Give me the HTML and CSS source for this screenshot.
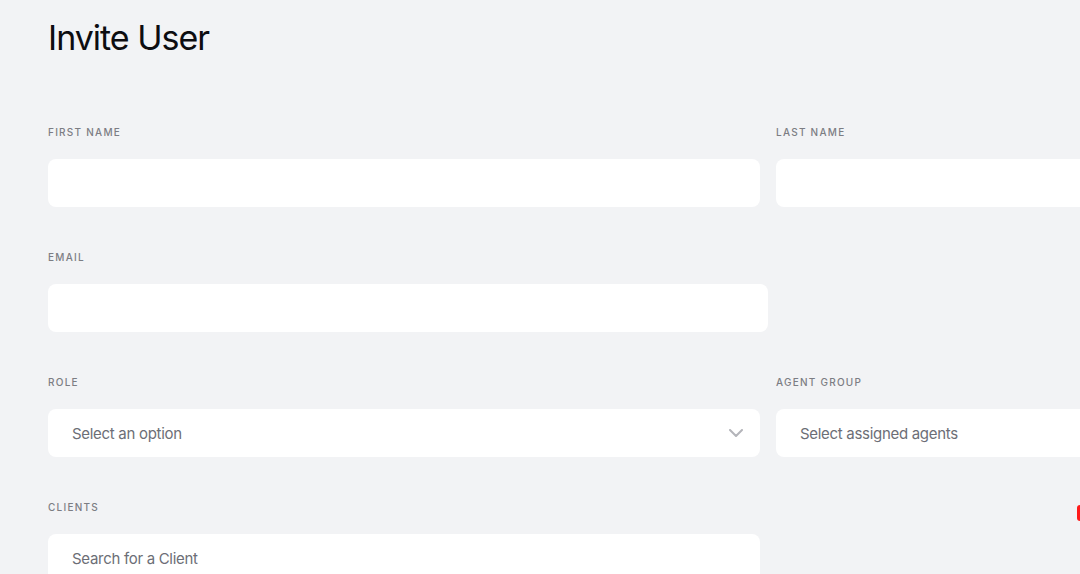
FILE: index.html
```html
<!DOCTYPE html>
<html lang="en">
<head>
<meta charset="utf-8">
<title>Invite User</title>
<link rel="stylesheet" href="styles.css">
</head>
<body>
<main class="page">
  <h1 class="title">Invite User</h1>
  <form class="form">
    <div class="row two">
      <div class="field">
        <label class="label">First Name</label>
        <div class="input"></div>
      </div>
      <div class="field">
        <label class="label">Last Name</label>
        <div class="input"></div>
      </div>
    </div>
    <div class="row">
      <div class="field email">
        <label class="label">Email</label>
        <div class="input"></div>
      </div>
    </div>
    <div class="row two">
      <div class="field">
        <label class="label">Role</label>
        <div class="input select">
          <span class="placeholder">Select an option</span>
          <svg class="chevron" width="14" height="8" viewBox="0 0 14 8"><path d="M1 1l6 6 6-6" fill="none" stroke="#b4b5ba" stroke-width="2" stroke-linecap="round" stroke-linejoin="round"/></svg>
        </div>
      </div>
      <div class="field">
        <label class="label">Agent Group</label>
        <div class="input select">
          <span class="placeholder">Select assigned agents</span>
        </div>
      </div>
    </div>
    <div class="row two">
      <div class="field">
        <label class="label">Clients</label>
        <div class="input select">
          <span class="placeholder">Search for a Client</span>
        </div>
      </div>
      <div class="field"></div>
    </div>
  </form>
  <span class="red-mark"></span>
</main>
</body>
</html>
```
FILE: styles.css
```css
html, body {
  margin: 0;
  padding: 0;
  background: #f2f3f5;
  overflow: hidden;
}
body {
  width: 1080px;
  height: 574px;
  font-family: "Inter", "Noto Sans", sans-serif;
  color: #111;
}
.page {
  position: relative;
  padding: 18px 0 0 48px;
  height: 574px;
  box-sizing: border-box;
  overflow: hidden;
}
.title {
  margin: 0;
  font-size: 34px;
  line-height: 40px;
  font-weight: 400;
  letter-spacing: -1px;
  color: #0d0d10;
}
.form {
  margin-top: 67px;
  display: flex;
  flex-direction: column;
  gap: 43px;
}
.row {
  display: flex;
}
.row.two {
  display: grid;
  grid-template-columns: 712px 712px;
  column-gap: 16px;
}
.field {
  display: flex;
  flex-direction: column;
  gap: 20px;
}
.field.email {
  width: 720px;
}
.label {
  font-size: 10px;
  line-height: 14px;
  letter-spacing: 1.25px;
  text-transform: uppercase;
  color: #7c7d83;
  font-weight: 500;
}
.input {
  height: 48px;
  background: #ffffff;
  border-radius: 8px;
  box-sizing: border-box;
}
.select {
  display: flex;
  align-items: center;
  justify-content: space-between;
  padding: 0 17px 0 24px;
}
.placeholder {
  font-size: 15px;
  color: #6c6e76;
  letter-spacing: -0.3px;
}
.chevron {
  display: block;
}
.red-mark {
  position: absolute;
  left: 1077px;
  top: 505px;
  width: 6px;
  height: 16px;
  background: #ff1a1a;
  border-radius: 3px 0 0 3px;
}
```
